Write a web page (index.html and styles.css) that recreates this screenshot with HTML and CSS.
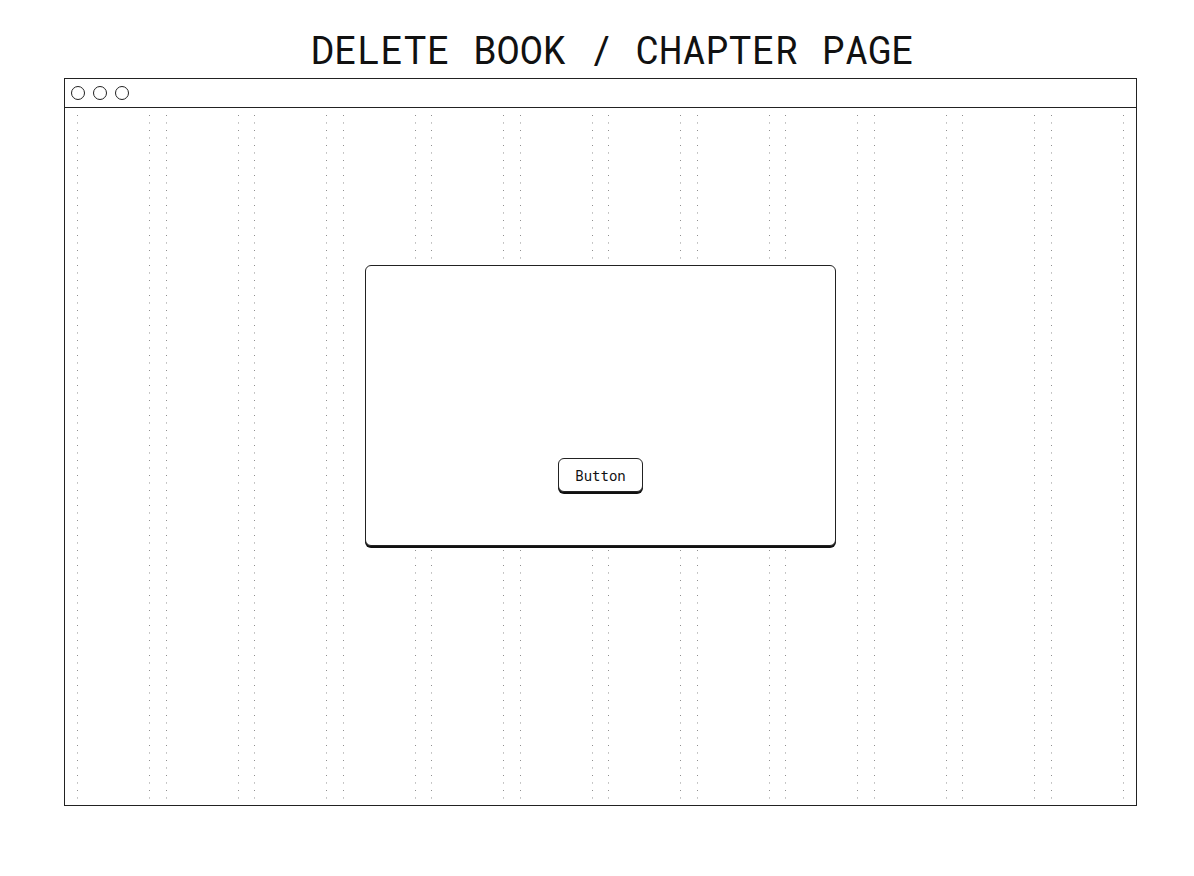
FILE: index.html
```html
<!DOCTYPE html>
<html>
<head>
<meta charset="utf-8">
<link rel="stylesheet" href="styles.css">
</head>
<body>
<header class="title">DELETE BOOK / CHAPTER PAGE</header>
<div class="frame">
  <div class="topbar">
    <span class="dot"></span><span class="dot"></span><span class="dot"></span>
  </div>
  <div class="content">
    <div class="columns">
      <div class="col"></div><div class="col"></div><div class="col"></div><div class="col"></div>
      <div class="col"></div><div class="col"></div><div class="col"></div><div class="col"></div>
      <div class="col"></div><div class="col"></div><div class="col"></div><div class="col"></div>
    </div>
    <div class="modal">
      <button class="btn">Button</button>
    </div>
  </div>
</div>
</body>
</html>
```
FILE: styles.css
```css
html, body {
  margin: 0;
  padding: 0;
  background: #fff;
}
body {
  width: 1194px;
  height: 876px;
  font-family: "Roboto Mono", "Liberation Mono", "DejaVu Sans Mono", monospace;
  color: #111;
}
.title {
  height: 78px;
  box-sizing: border-box;
  padding: 25px 0 0 31px;
  text-align: center;
  font-size: 38.7px;
  line-height: 48px;
  letter-spacing: 0;
}
.frame {
  margin-left: 64px;
  width: 1073px;
  height: 728px;
  box-sizing: border-box;
  border: 1px solid #222;
  display: flex;
  flex-direction: column;
}
.topbar {
  height: 29px;
  box-sizing: border-box;
  border-bottom: 1px solid #222;
  display: flex;
  align-items: center;
  gap: 8px;
  padding-left: 6px;
}
.dot {
  width: 14px;
  height: 14px;
  box-sizing: border-box;
  border: 1px solid #222;
  border-radius: 50%;
}
.content {
  position: relative;
  flex: 1;
  display: flex;
  justify-content: center;
  align-items: flex-start;
  padding-top: 157px;
  box-sizing: border-box;
}
.columns {
  position: absolute;
  inset: 6px 12px 4px 12px;
  display: grid;
  grid-template-columns: repeat(12, 1fr);
  column-gap: 15.5px;
}
.col {
  background-image:
    linear-gradient(to bottom, #8a8a8a 1px, transparent 1px),
    linear-gradient(to bottom, #8a8a8a 1px, transparent 1px);
  background-size: 1px 7.5px, 1px 7.5px;
  background-repeat: repeat-y, repeat-y;
  background-position: left 1px, right 1px;
}
.modal {
  position: relative;
  width: 471px;
  height: 281px;
  box-sizing: border-box;
  background: #fff;
  border: 1px solid #222;
  border-radius: 6px;
  box-shadow: 0 2px 0 #111;
  display: flex;
  justify-content: center;
  align-items: flex-end;
  padding-bottom: 53px;
}
.btn {
  width: 85px;
  height: 34px;
  box-sizing: border-box;
  background: #fff;
  border: 1px solid #222;
  border-radius: 6px;
  box-shadow: 0 2px 0 #111;
  font-family: "Roboto Mono", "Liberation Mono", "DejaVu Sans Mono", monospace;
  font-size: 14px;
  font-weight: 400;
  color: #111;
  padding: 0;
}
```
